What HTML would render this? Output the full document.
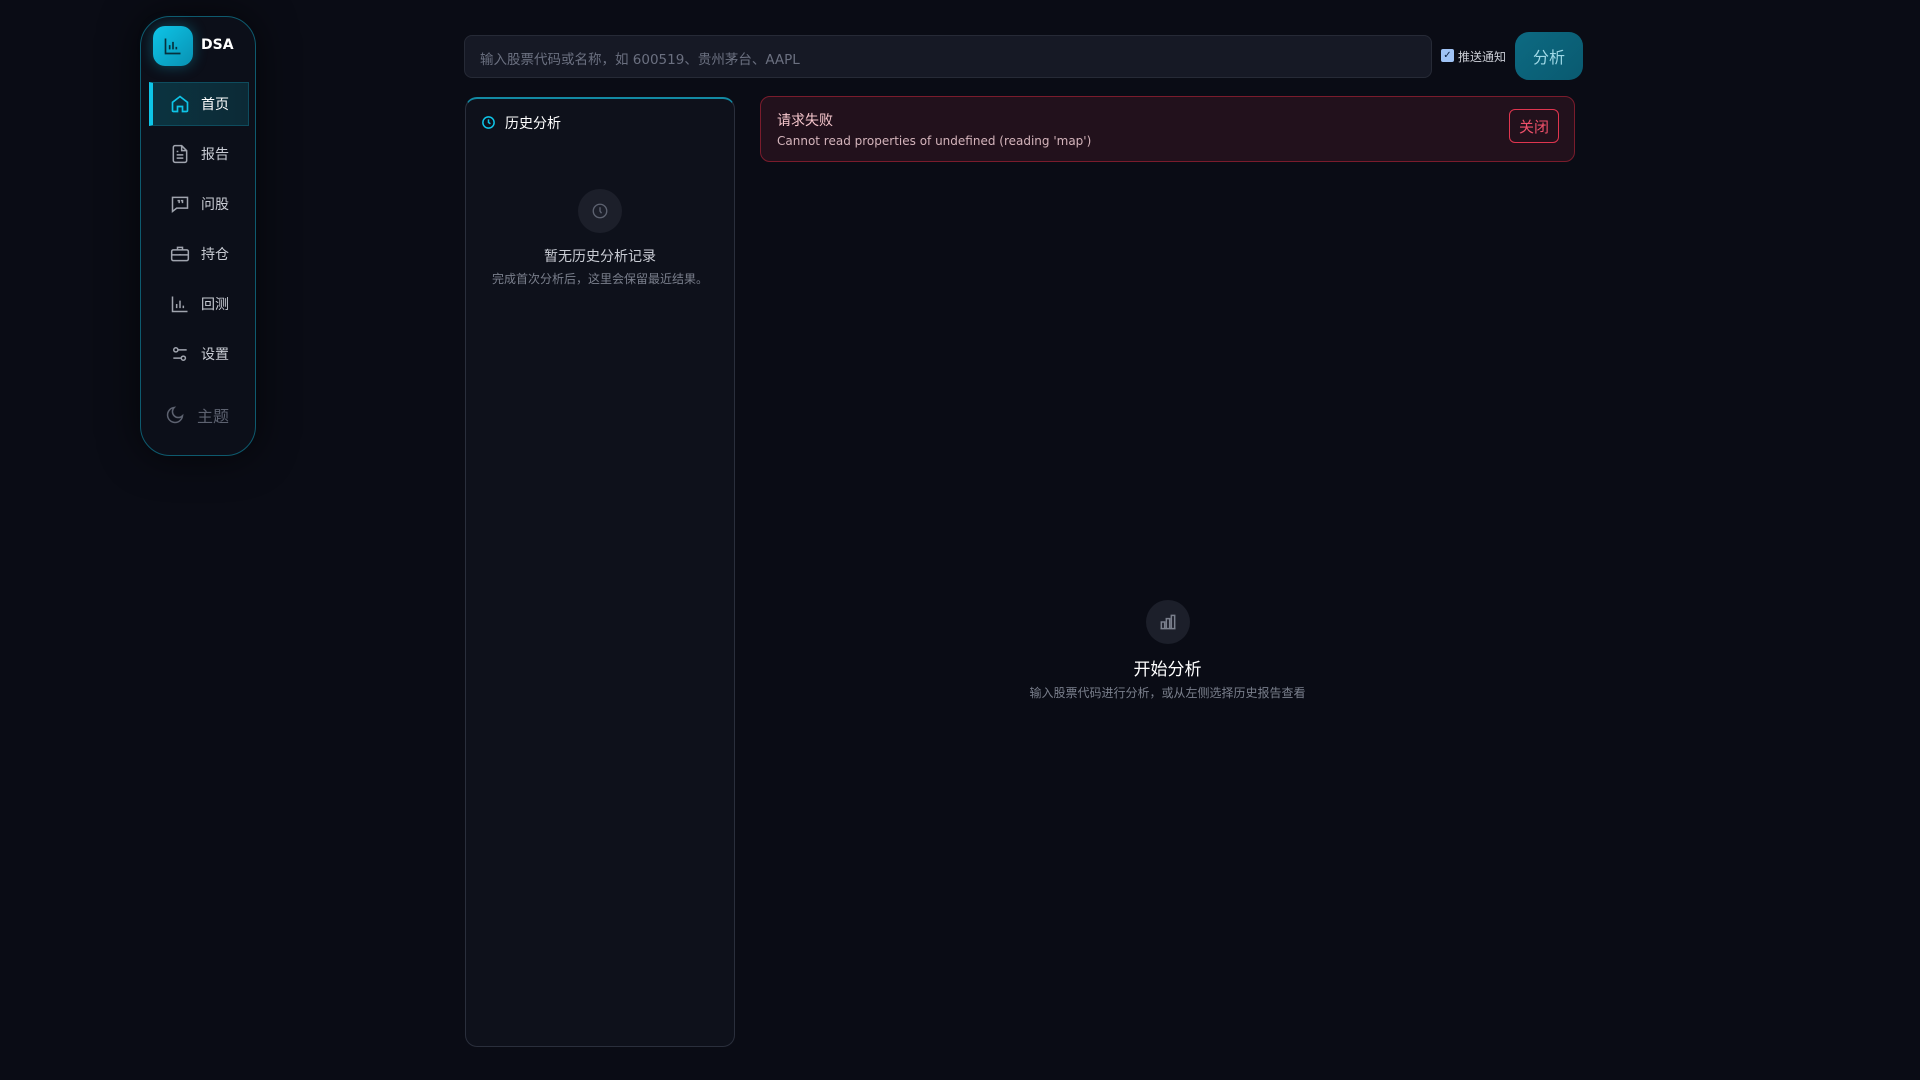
<!DOCTYPE html>
<html><head><meta charset="utf-8"><style>
*{box-sizing:border-box;margin:0;padding:0}
body{width:1920px;height:1080px;background:#0a0c15;font-family:"DejaVu Sans","Noto Sans CJK SC",sans-serif;color:#e5e7eb;position:relative;overflow:hidden}
.abs{position:absolute}
.side{left:140px;top:16px;width:116px;height:440px;border:1px solid #0e5a6e;border-radius:30px;background:#0c0f19;box-shadow:0 0 40px rgba(0,0,0,.6)}
.logo{left:12px;top:9px;width:40px;height:40px;border-radius:12px;background:linear-gradient(135deg,#0ec5e8,#0891b2);box-shadow:0 0 14px rgba(14,197,232,.35);display:flex;align-items:center;justify-content:center}
.dsa{left:60px;top:20px;font-weight:bold;font-size:14px;color:#fff}
.item{left:0;width:116px;height:44px;display:flex;align-items:center;font-size:14px;color:#c9ccd4}
.item svg{position:absolute;left:29px}
.item span{position:absolute;left:60px}
.active{left:8px;width:100px;background:linear-gradient(90deg,#0b3340,#0c2a36);border:1px solid #0e4c5e;border-left:4px solid #0ec5e8;color:#fff}
.active svg{left:17px}.active span{left:48px}
.inp{left:464px;top:35px;width:968px;height:43px;background:#161925;border:1px solid #262a36;border-radius:8px;color:#6b7080;font-size:13.5px;padding:12px 15px}
.btn{left:1515px;top:32px;width:68px;height:48px;border-radius:14px;background:linear-gradient(135deg,#0c6a82,#0a5a70);color:#9fd8e6;font-size:16px;display:flex;align-items:center;justify-content:center}
.hist{left:465px;top:97px;width:270px;height:950px;border:1px solid #2a2f3c;border-top:2px solid #138aa4;border-radius:12px;background:#0e111b}
.err{left:760px;top:96px;width:815px;height:66px;border:1px solid #7a1c2c;border-radius:10px;background:#22111c}
.circle{width:44px;height:44px;border-radius:50%;background:#1c1f2a;display:flex;align-items:center;justify-content:center}
</style></head><body>
<div class="abs side">
 <div class="abs logo"><svg width="20" height="20" viewBox="0 0 24 24" fill="none" stroke="#06303c" stroke-width="2"><path d="M3 3v18h18M8 16v-5M12 16V7M16 16v-3"/></svg></div>
 <div class="abs dsa">DSA</div>
 <div class="abs item active" style="top:65px"><svg width="20" height="20" viewBox="0 0 24 24" fill="none" stroke="#0ec5e8" stroke-width="2"><path d="M3 10l9-7 9 7v10a1 1 0 0 1-1 1h-5v-6h-6v6H4a1 1 0 0 1-1-1z"/></svg><span>首页</span></div>
 <div class="abs item" style="top:115px"><svg width="20" height="20" viewBox="0 0 24 24" fill="none" stroke="#a0a4ae" stroke-width="1.8"><path d="M14 2H6a2 2 0 0 0-2 2v16a2 2 0 0 0 2 2h12a2 2 0 0 0 2-2V8z"/><path d="M14 2v6h6M8 13h8M8 17h8M8 9h2"/></svg><span>报告</span></div>
 <div class="abs item" style="top:165px"><svg width="20" height="20" viewBox="0 0 24 24" fill="none" stroke="#a0a4ae" stroke-width="1.8"><path d="M3 4h18v13H8l-5 4z"/><path d="M9 8h2v3M13 8h2v3"/></svg><span>问股</span></div>
 <div class="abs item" style="top:215px"><svg width="20" height="20" viewBox="0 0 24 24" fill="none" stroke="#a0a4ae" stroke-width="1.8"><rect x="2" y="7" width="20" height="13" rx="2"/><path d="M9 7V4h6v3M2 13h20M12 12v2"/></svg><span>持仓</span></div>
 <div class="abs item" style="top:265px"><svg width="20" height="20" viewBox="0 0 24 24" fill="none" stroke="#a0a4ae" stroke-width="1.8"><path d="M3 3v18h18M8 17v-5M12 17V8M16 17v-3"/></svg><span>回测</span></div>
 <div class="abs item" style="top:315px"><svg width="20" height="20" viewBox="0 0 24 24" fill="none" stroke="#a0a4ae" stroke-width="1.8"><circle cx="7" cy="7" r="2.5"/><circle cx="16" cy="17" r="2.5"/><path d="M10 7h10M4 17h9"/></svg><span>设置</span></div>
 <div class="abs item" style="top:376px;font-size:16px;color:#5d6270"><svg width="20" height="20" viewBox="0 0 24 24" fill="none" stroke="#5d6270" stroke-width="1.8" style="left:24px"><path d="M21 13A9 9 0 1 1 11 3a7 7 0 0 0 10 10z"/></svg><span style="left:56px">主题</span></div>
</div>
<div class="abs inp">输入股票代码或名称，如 600519、贵州茅台、AAPL</div>
<div class="abs" style="left:1441px;top:49px;width:13px;height:13px;background:#9fc3f5;border-radius:2px;color:#0a2040;font-size:10px;line-height:13px;text-align:center">✓</div>
<div class="abs" style="left:1458px;top:48px;font-size:12px;color:#c9ccd4">推送通知</div>
<div class="abs btn">分析</div>
<div class="abs hist">
 <div class="abs" style="left:15px;top:16px"><svg width="15" height="15" viewBox="0 0 24 24" fill="none" stroke="#0ec5e8" stroke-width="2.4"><circle cx="12" cy="12" r="9"/><path d="M12 7v5l3 2"/></svg></div>
 <div class="abs" style="left:39px;top:14px;font-size:14px;color:#fff">历史分析</div>
 <div class="abs circle" style="left:112px;top:90px"><svg width="18" height="18" viewBox="0 0 24 24" fill="none" stroke="#5d6270" stroke-width="1.8"><circle cx="12" cy="12" r="9"/><path d="M12 7v5l2 3"/></svg></div>
 <div class="abs" style="left:0;width:268px;text-align:center;top:147px;font-size:14px;color:#c9ccd4">暂无历史分析记录</div>
 <div class="abs" style="left:0;width:268px;text-align:center;top:171px;font-size:12px;color:#7a7f8c">完成首次分析后，这里会保留最近结果。</div>
</div>
<div class="abs err">
 <div class="abs" style="left:16px;top:13px;font-size:14px;color:#f5c6cc">请求失败</div>
 <div class="abs" style="left:16px;top:37px;font-size:12px;color:#d4b4bb">Cannot read properties of undefined (reading 'map')</div>
 <div class="abs" style="left:748px;top:12px;width:50px;height:34px;border:1px solid #e0354f;border-radius:6px;color:#f0506a;font-size:15px;display:flex;align-items:center;justify-content:center">关闭</div>
</div>
<div class="abs circle" style="left:1146px;top:600px"><svg width="20" height="20" viewBox="0 0 24 24" fill="none" stroke="#7a7f8c" stroke-width="1.8"><path d="M4 20V12h4v8M10 20V8h4v12M16 20V4h4v16M3 20h18"/></svg></div>
<div class="abs" style="left:760px;width:815px;text-align:center;top:655px;font-size:17px;color:#fff">开始分析</div>
<div class="abs" style="left:760px;width:815px;text-align:center;top:684px;font-size:12px;color:#7a7f8c">输入股票代码进行分析，或从左侧选择历史报告查看</div>
</body></html>
